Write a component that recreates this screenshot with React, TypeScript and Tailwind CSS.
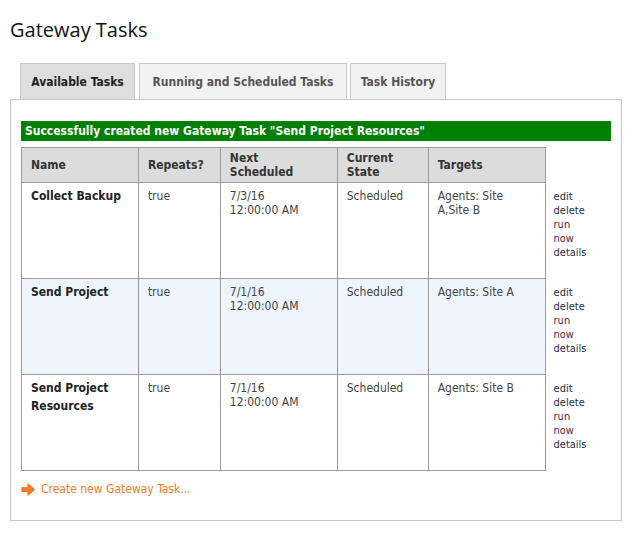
import React from "react";

const body = { fontFamily: '"DejaVu Sans Condensed", "Liberation Sans", sans-serif' };

type Row = { name: string; next: [string, string]; targets: string; bg: string };

const rows: Row[] = [
  { name: "Collect Backup", next: ["7/3/16", "12:00:00 AM"], targets: "Agents: Site A,Site B", bg: "bg-white" },
  { name: "Send Project", next: ["7/1/16", "12:00:00 AM"], targets: "Agents: Site A", bg: "bg-[#eef5fd]" },
  { name: "Send Project Resources", next: ["7/1/16", "12:00:00 AM"], targets: "Agents: Site B", bg: "bg-white" },
];

function Arrow() {
  return (
    <svg width="14" height="13" viewBox="0 0 14 13" className="shrink-0">
      <path
        d="M1.2 4.8 H7.2 V1.3 L12.8 6.5 L7.2 11.7 V8.2 H1.2 Z"
        fill="#f07c28"
        stroke="#f07c28"
        strokeWidth="1.8"
        strokeLinejoin="round"
      />
    </svg>
  );
}

export default function App() {
  return (
    <div className="w-[627px] h-[533px] bg-white text-[#333]" style={body}>
      <div className="pl-[10px] pt-[16px]">
        <h1
          className="text-[20px] leading-[28px] text-[#111] font-normal"
          style={{ fontFamily: '"Open Sans", "Noto Sans", sans-serif' }}
        >
          Gateway Tasks
        </h1>
      </div>
      <div className="ml-[10px] w-[612px] mt-[19px]">
        <div className="flex pl-[10px] text-[12px] font-bold">
          <div className="w-[115px] h-[36px] flex items-center justify-center bg-[#dedede] border border-[#c8c8c8] border-b-0 text-[#222]">
            Available Tasks
          </div>
          <div className="ml-[4px] w-[208px] h-[36px] flex items-center justify-center bg-[#f2f2f2] border border-[#c8c8c8] border-b-0 text-[#555]">
            Running and Scheduled Tasks
          </div>
          <div className="ml-[3px] w-[96px] h-[36px] flex items-center justify-center bg-[#f2f2f2] border border-[#c8c8c8] border-b-0 text-[#555]">
            Task History
          </div>
        </div>
        <div className="border border-[#c8c8c8] h-[422px] px-[10px] pt-[21px]">
          <div className="h-[20px] bg-[#008000] text-white text-[12px] font-bold leading-[20px] pl-[4px]">
            Successfully created new Gateway Task "Send Project Resources"
          </div>
          <table className="mt-[6px] border-collapse text-[12px] leading-[14px]">
            <thead>
              <tr className="h-[35px]">
                {[
                  ["Name", "w-[117px]"],
                  ["Repeats?", "w-[82px]"],
                  ["Next Scheduled", "w-[117px]"],
                  ["Current State", "w-[91px]"],
                  ["Targets", "w-[117px]"],
                ].map(([t, w]) => (
                  <th
                    key={t}
                    className={`${w} bg-[#dcdcdc] border border-[#9a9a9a] text-left align-middle font-bold text-[#333] px-[9px] py-[3px]`}
                  >
                    {t === "Next Scheduled" ? (
                      <>
                        Next
                        <br />
                        Scheduled
                      </>
                    ) : t === "Current State" ? (
                      <>
                        Current
                        <br />
                        State
                      </>
                    ) : (
                      t
                    )}
                  </th>
                ))}
                <th className="w-[66px]"></th>
              </tr>
            </thead>
            <tbody>
              {rows.map((r) => (
                <tr key={r.name} className="h-[96px]">
                  <td className={`${r.bg} border border-[#9a9a9a] align-top px-[9px] pt-[6px] font-bold text-[#222] leading-[18px]`}>
                    <div className="-mt-[2px]">{r.name}</div>
                  </td>
                  <td className={`${r.bg} border border-[#9a9a9a] align-top px-[9px] pt-[6px] text-[#444]`}>true</td>
                  <td className={`${r.bg} border border-[#9a9a9a] align-top px-[9px] pt-[6px] text-[#444]`}>
                    {r.next[0]}
                    <br />
                    {r.next[1]}
                  </td>
                  <td className={`${r.bg} border border-[#9a9a9a] align-top px-[9px] pt-[6px] text-[#444]`}>Scheduled</td>
                  <td className={`${r.bg} border border-[#9a9a9a] align-top px-[9px] pt-[6px] text-[#444]`}>{r.targets}</td>
                  <td className="align-top pl-[8px] pt-[7px] text-[11px] leading-[14px]">
                    <div className="w-[32px] flex flex-col">
                      <span className="text-[#1f2d4a]">edit</span>
                      <span className="text-[#1f2d4a]">delete</span>
                      <span className="text-[#4a1f3a]">run now</span>
                      <span className="text-[#1f2d4a]">details</span>
                    </div>
                  </td>
                </tr>
              ))}
            </tbody>
          </table>
          <div className="mt-[9px] flex items-center gap-[6px] text-[12px] text-[#f07c28]">
            <Arrow />
            <span>Create new Gateway Task...</span>
          </div>
        </div>
      </div>
    </div>
  );
}
